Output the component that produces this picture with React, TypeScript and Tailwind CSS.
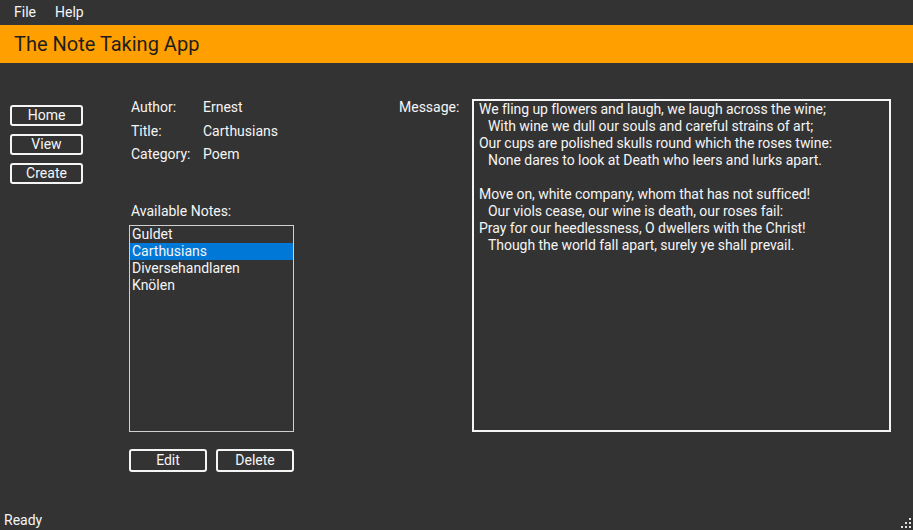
const notes = ['Guldet', 'Carthusians', 'Diversehandlaren', 'Knölen'];

const poem: { text: string; indent?: boolean }[] = [
  { text: 'We fling up flowers and laugh, we laugh across the wine;' },
  { text: 'With wine we dull our souls and careful strains of art;', indent: true },
  { text: 'Our cups are polished skulls round which the roses twine:' },
  { text: 'None dares to look at Death who leers and lurks apart.', indent: true },
  { text: '' },
  { text: 'Move on, white company, whom that has not sufficed!' },
  { text: 'Our viols cease, our wine is death, our roses fail:', indent: true },
  { text: 'Pray for our heedlessness, O dwellers with the Christ!' },
  { text: 'Though the world fall apart, surely ye shall prevail.', indent: true },
];

const NavButton = ({ label }: { label: string }) => (
  <button className="h-[21px] w-[73px] rounded-[3px] border-2 border-[#f5f5f5] text-[14px] leading-[17px] text-[#f5f5f5]">{label}</button>
);

const ActionButton = ({ label }: { label: string }) => (
  <button className="h-[23px] w-[78px] rounded-[3px] border-2 border-[#f5f5f5] text-[14px] leading-[17px] text-[#f5f5f5]">{label}</button>
);

const App = () => {
  return (
    <div className="flex h-[530px] w-[913px] flex-col overflow-hidden bg-[#333333] text-[14px] text-[#f5f5f5] font-['Roboto',sans-serif]">
      <div className="flex h-[25px] items-center gap-[19px] pl-[14px] leading-[17px]">
        <span>File</span>
        <span>Help</span>
      </div>
      <div className="flex h-[38px] items-center bg-[#ffa000] pl-[14px] text-[20px] text-[#1e1e1e]">The Note Taking App</div>

      <div className="flex flex-1 pt-[36px]">
        <div className="ml-[10px] mt-[6px] flex flex-col gap-[8px]">
          <NavButton label="Home" />
          <NavButton label="View" />
          <NavButton label="Create" />
        </div>

        <div className="ml-[46px] flex w-[165px] flex-col">
          <div className="grid grid-cols-[72px_1fr] gap-y-[6.5px] pl-[2px] leading-[17px]">
            <span>Author:</span><span>Ernest</span>
            <span>Title:</span><span>Carthusians</span>
            <span>Category:</span><span>Poem</span>
          </div>
          <p className="mt-[40px] pl-[2px] leading-[17px]">Available Notes:</p>
          <div className="mt-[5px] h-[207px] border border-[#d0d0d0] leading-[17px]">
            {notes.map((note) => (
              <div key={note} className={note === 'Carthusians' ? 'bg-[#0078d7] pl-[2px]' : 'pl-[2px]'}>{note}</div>
            ))}
          </div>
          <div className="mt-[17px] flex gap-[9px]">
            <ActionButton label="Edit" />
            <ActionButton label="Delete" />
          </div>
        </div>

        <div className="ml-[105px] w-[73px] leading-[17px]">Message:</div>
        <div className="h-[333px] w-[419px] border-2 border-[#f5f5f5] px-[5px] leading-[17px] tracking-[-0.05px]">
          {poem.map((line, i) => (
            <div key={i} className={line.indent ? 'h-[17px] pl-[9px]' : 'h-[17px]'}>{line.text}</div>
          ))}
        </div>
      </div>

      <div className="relative flex h-[20px] items-center pl-[4px] leading-[17px]">
        <span>Ready</span>
        <svg className="absolute bottom-0 right-0" width="14" height="14" viewBox="0 0 14 14">
          <g fill="#e0e0e0">
            <rect x="10" y="2" width="2" height="2" />
            <rect x="6" y="6" width="2" height="2" />
            <rect x="10" y="6" width="2" height="2" />
            <rect x="2" y="10" width="2" height="2" />
            <rect x="6" y="10" width="2" height="2" />
            <rect x="10" y="10" width="2" height="2" />
          </g>
        </svg>
      </div>
    </div>
  );
};

export default App;
